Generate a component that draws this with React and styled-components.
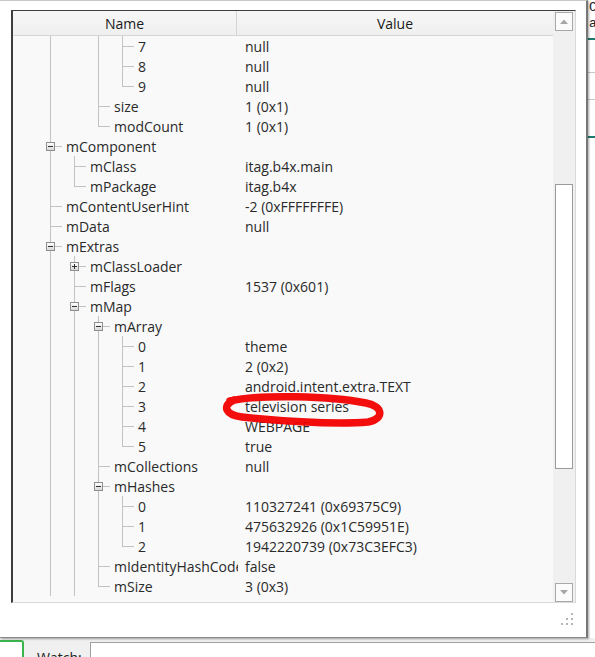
import React from "react";
import styled, { createGlobalStyle } from "styled-components";

const LINE = "#c2c2c2";
const UI_FONT = `"Open Sans", "Noto Sans", Arial, sans-serif`;

const GlobalStyle = createGlobalStyle`
  html, body { margin: 0; padding: 0; background: #ffffff; }
  body { font-family: ${UI_FONT}; }
  * { box-sizing: border-box; }
`;

const Screen = styled.div`
  position: relative;
  width: 595px;
  height: 657px;
  overflow: hidden;
  display: flex;
  flex-direction: column;
  background: #ffffff;
`;

const TopRow = styled.div`
  display: flex;
  height: 638px;
`;

const Popup = styled.div`
  position: relative;
  width: 588px;
  height: 638px;
  background: #ffffff;
  border-top: 1px solid #c9c9c9;
  border-right: 2px solid #777777;
  border-bottom: 1px solid #8a8a8a;
  box-shadow: 1px 1px 2px rgba(0, 0, 0, 0.35);
  padding: 9px 10px 0 11px;
  display: flex;
  flex-direction: column;
  z-index: 2;
`;

const SideStrip = styled.div`
  flex: 1;
  background: #ffffff;
  font-family: "Liberation Mono", monospace;
  font-size: 13px;
  color: #222;
  overflow: hidden;
  white-space: nowrap;
  display: flex;
  flex-direction: column;
`;

const StripText = styled.div`
  height: 16px;
  line-height: 16px;
  padding-left: 1px;
`;

const StripLine = styled.div`
  height: ${(p) => p.$h || 1}px;
  margin-top: ${(p) => p.$gap}px;
  background: ${(p) => p.$color};
`;

const Frame = styled.div`
  display: flex;
  width: 565px;
  height: 593px;
  background: #f9f9f9;
  border-left: 2px solid #3d3d3d;
  border-top: 1px solid #3d3d3d;
  border-right: 1px solid #d9d9d9;
  border-bottom: 1px solid #d9d9d9;
`;

const Main = styled.div`
  width: 540px;
  display: flex;
  flex-direction: column;
  overflow: hidden;
`;

const Header = styled.div`
  display: grid;
  grid-template-columns: 224px 1fr;
  height: 25px;
  flex: none;
  background: linear-gradient(#f7f7f7, #efefef);
  border-bottom: 1px solid #d5d5d5;
`;

const HeaderCell = styled.div`
  display: flex;
  align-items: center;
  justify-content: center;
  font-size: 14px;
  color: #1a1a1a;
  border-right: ${(p) => (p.$divider ? "1px solid #d5d5d5" : "none")};
  padding-top: 1px;
`;

const Rows = styled.div`
  display: flex;
  flex-direction: column;
`;

const Row = styled.div`
  display: grid;
  grid-template-columns: 225px 1fr;
  height: 20px;
  font-size: 14px;
  color: #2a2a2a;
`;

const NameCell = styled.div`
  display: flex;
  align-items: stretch;
  padding-left: 25px;
  overflow: hidden;
  white-space: nowrap;
`;

const Guide = styled.span`
  position: relative;
  flex: 0 0 24px;
  height: 20px;

  &::before {
    content: "";
    position: absolute;
    left: 12px;
    top: 0;
    width: 1px;
    height: ${(p) => (p.$kind === "e" ? "11px" : "20px")};
    background: ${(p) => (p.$kind === "_" ? "transparent" : LINE)};
  }

  &::after {
    content: "";
    position: absolute;
    left: 12px;
    top: 10px;
    width: 12px;
    height: 1px;
    background: ${(p) => (p.$kind === "t" || p.$kind === "e" ? LINE : "transparent")};
  }
`;

const ExpandBox = styled.span`
  position: absolute;
  left: 8px;
  top: 6px;
  width: 9px;
  height: 9px;
  z-index: 1;
  border: 1px solid #8e8e8e;
  background: linear-gradient(#ffffff, #d8d8d8);

  &::before {
    content: "";
    position: absolute;
    left: 1px;
    top: 3px;
    width: 5px;
    height: 1px;
    background: #303030;
  }

  &::after {
    content: "";
    position: absolute;
    left: 3px;
    top: 1px;
    width: 1px;
    height: 5px;
    background: ${(p) => (p.$open ? "transparent" : "#303030")};
  }
`;

const Label = styled.span`
  padding-left: 4px;
  line-height: 21px;
`;

const ValueCell = styled.div`
  padding-left: 7px;
  line-height: 21px;
  white-space: nowrap;
  overflow: hidden;
`;

const ScrollBar = styled.div`
  width: 22px;
  display: flex;
  flex-direction: column;
  align-items: center;
  padding: 1px 0 0;
  background: #f0f0f0;
`;

const ArrowButton = styled.div`
  width: 18px;
  height: 19px;
  flex: none;
  display: flex;
  align-items: center;
  justify-content: center;
  background: #fbfbfb;
  border: 1px solid #a9a9a9;
`;

const Track = styled.div`
  flex: 1;
  width: 100%;
  display: flex;
  justify-content: center;
  padding-top: ${(p) => p.$offset}px;
`;

const Thumb = styled.div`
  width: 18px;
  height: ${(p) => p.$size}px;
  background: #ffffff;
  border: 1px solid #9b9b9b;
`;

const Footer = styled.div`
  flex: 1;
  display: flex;
  justify-content: flex-end;
  align-items: flex-start;
  padding: 9px 2px 0 0;
`;

const WatchBar = styled.div`
  flex: 1;
  display: flex;
  align-items: flex-start;
  background: #f0f0f0;
  padding-top: 2px;
`;

const GreenTab = styled.div`
  width: 24px;
  height: 20px;
  background: #ffffff;
  border: 2px solid #3bb54a;
  border-left: none;
  border-bottom: none;
  border-top-right-radius: 3px;
`;

const WatchLabel = styled.div`
  width: 66px;
  padding: 8px 0 0 13px;
  font-size: 14px;
  color: #222;
`;

const WatchInput = styled.div`
  flex: 1;
  height: 20px;
  margin-top: 2px;
  background: #ffffff;
  border-top: 1px solid #a0a0a0;
  border-left: 1px solid #a0a0a0;
`;

const Annotation = styled.svg`
  position: absolute;
  left: 0;
  top: 0;
  width: 595px;
  height: 657px;
  pointer-events: none;
  z-index: 5;
`;

const rows = [
  ["7", "null", "l_lt"],
  ["8", "null", "l_lt"],
  ["9", "null", "l_le"],
  ["size", "1 (0x1)", "l_t"],
  ["modCount", "1 (0x1)", "l_e"],
  ["mComponent", "", "t", "-"],
  ["mClass", "itag.b4x.main", "lt"],
  ["mPackage", "itag.b4x", "le"],
  ["mContentUserHint", "-2 (0xFFFFFFFE)", "t"],
  ["mData", "null", "t"],
  ["mExtras", "", "t", "-"],
  ["mClassLoader", "", "lt", "+"],
  ["mFlags", "1537 (0x601)", "lt"],
  ["mMap", "", "lt", "-"],
  ["mArray", "", "llt", "-"],
  ["0", "theme", "lllt"],
  ["1", "2 (0x2)", "lllt"],
  ["2", "android.intent.extra.TEXT", "lllt"],
  ["3", "television series", "lllt"],
  ["4", "WEBPAGE", "lllt"],
  ["5", "true", "llle"],
  ["mCollections", "null", "llt"],
  ["mHashes", "", "llt", "-"],
  ["0", "110327241 (0x69375C9)", "lllt"],
  ["1", "475632926 (0x1C59951E)", "lllt"],
  ["2", "1942220739 (0x73C3EFC3)", "llle"],
  ["mIdentityHashCode", "false", "llt"],
  ["mSize", "3 (0x3)", "lle"],
];

function TreeRow({ name, value, guides, box }) {
  const kinds = guides.split("");
  return (
    <Row>
      <NameCell>
        {kinds.map((k, i) => (
          <Guide key={i} $kind={k}>
            {box && i === kinds.length - 1 && <ExpandBox $open={box === "-"} />}
          </Guide>
        ))}
        <Label>{name}</Label>
      </NameCell>
      <ValueCell>{value}</ValueCell>
    </Row>
  );
}

const Arrow = ({ down }) => (
  <svg width="8" height="5" viewBox="0 0 8 5">
    <polygon points={down ? "0,0 8,0 4,4.5" : "0,5 8,5 4,0.5"} fill="#a6a6a6" />
  </svg>
);

const Grip = () => (
  <svg width="14" height="14" viewBox="0 0 14 14">
    {[
      [11, 1],
      [6, 6],
      [11, 6],
      [1, 11],
      [6, 11],
      [11, 11],
    ].map(([x, y], i) => (
      <rect key={i} x={x} y={y} width="2" height="2" fill="#b4b4b4" />
    ))}
  </svg>
);

export default function App() {
  return (
    <>
      <GlobalStyle />
      <Screen>
        <TopRow>
          <Popup>
            <Frame>
              <Main>
                <Header>
                  <HeaderCell $divider>Name</HeaderCell>
                  <HeaderCell>Value</HeaderCell>
                </Header>
                <Rows>
                  {rows.map(([name, value, guides, box], i) => (
                    <TreeRow key={i} name={name} value={value} guides={guides} box={box} />
                  ))}
                </Rows>
              </Main>
              <ScrollBar>
                <ArrowButton>
                  <Arrow />
                </ArrowButton>
                <Track $offset={153}>
                  <Thumb $size={285} />
                </Track>
                <ArrowButton>
                  <Arrow down />
                </ArrowButton>
              </ScrollBar>
            </Frame>
            <Footer>
              <Grip />
            </Footer>
          </Popup>
          <SideStrip>
            <StripText>Ca</StripText>
            <StripText>al</StripText>
            <StripLine $gap={6} $h={2} $color="#1f7a6e" />
            <StripLine $gap={32} $color="#c8c8c8" />
            <StripLine $gap={26} $color="#c8c8c8" />
            <StripLine $gap={36} $h={2} $color="#1f7a6e" />
          </SideStrip>
        </TopRow>
        <WatchBar>
          <GreenTab />
          <WatchLabel>Watch:</WatchLabel>
          <WatchInput />
        </WatchBar>
        <Annotation viewBox="0 0 595 657">
          <path
            d="M230 401 C262 394, 330 396, 366 403 C383 406, 385 419, 368 422 C330 425, 270 420, 242 417 C226 415, 221 406, 234 400"
            fill="none"
            stroke="#f20000"
            strokeWidth="7.5"
            strokeLinecap="round"
            strokeLinejoin="round"
            opacity="0.95"
          />
        </Annotation>
      </Screen>
    </>
  );
}
